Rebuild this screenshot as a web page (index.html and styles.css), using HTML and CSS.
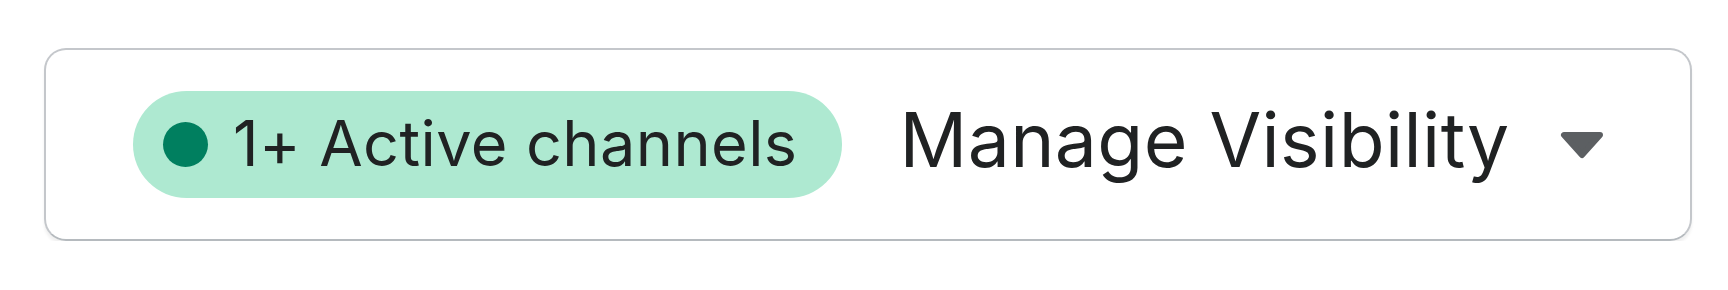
FILE: index.html
```html
<!DOCTYPE html>
<html lang="en">
<head>
    <meta charset="UTF-8">
    <meta name="viewport" content="width=device-width, initial-scale=1.0">
    <title>Channels</title>
    <link rel="stylesheet" href="styles.css">
</head>
<body>

<div class="card">
    <div class="badge">
        <span class="badge-dot"></span>
        <span class="badge-text">1+ Active channels</span>
    </div>
    <button class="visibility">
        <span>Manage Visibility</span>
        <svg class="caret" width="44" height="28" viewBox="0 0 44 28">
            <polygon points="4,4 40,4 22,24" fill="#5c5f62" stroke="#5c5f62" stroke-width="6" stroke-linejoin="round"/>
        </svg>
    </button>
</div>

</body>
</html>
```

FILE: styles.css
```css
body {
    font-family: Inter, "Noto Sans", sans-serif;
    margin: 0;
    padding: 0;
    background-color: white;
    color: #202223;
}
.card {
    display: flex;
    align-items: center;
    height: 189px;
    margin: 48px 36px 0 44px;
    padding: 0 40px 0 87px;
    border: 2px solid #c4c7cb;
    border-bottom-color: #b5babe;
    border-radius: 22px;
    box-shadow: 0 4px 3px rgba(0, 0, 0, 0.06);
    white-space: nowrap;
}
.badge {
    display: flex;
    flex-shrink: 0;
    align-items: center;
    height: 107px;
    padding: 0 45px 0 30px;
    gap: 25px;
    border-radius: 54px;
    background-color: #aee9d1;
    font-size: 63px;
    letter-spacing: 0.4px;
}
.badge-text {
    margin-top: -4px;
}
.badge-dot {
    width: 45px;
    height: 45px;
    border-radius: 50%;
    background-color: #007f5f;
}
.visibility {
    display: flex;
    flex-shrink: 0;
    align-items: center;
    margin-left: 57px;
    padding: 0;
    border: none;
    background: none;
    font-family: inherit;
    font-size: 75px;
    letter-spacing: 0.4px;
    color: #202223;
    cursor: pointer;
}
.visibility span {
    margin-top: -10px;
}
.caret {
    margin-left: 50px;
}
```
